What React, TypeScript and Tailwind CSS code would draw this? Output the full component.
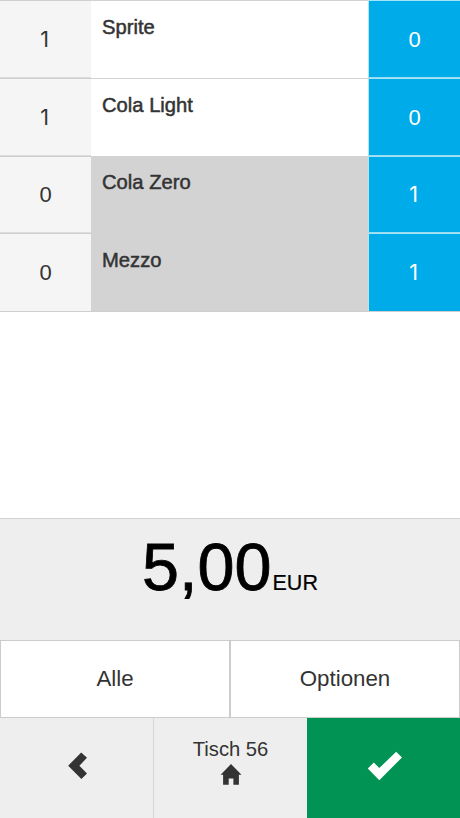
type Item = { name: string; open: number; picked: number; height: string; pad: string };

const items: Item[] = [
  { name: 'Sprite', open: 1, picked: 0, height: 'h-[78px]', pad: 'pt-[14px]' },
  { name: 'Cola Light', open: 1, picked: 0, height: 'h-[78px]', pad: 'pt-[14px]' },
  { name: 'Cola Zero', open: 0, picked: 1, height: 'h-[77px]', pad: 'pt-[13px]' },
  { name: 'Mezzo', open: 0, picked: 1, height: 'h-[78px]', pad: 'pt-[14px]' },
];

// The "1" is set in Inter, whose figure has no foot serif.
function Count({ value }: { value: number }) {
  return (
    <span className={value === 1 ? "mr-[2px] font-['Inter',sans-serif] text-[21.5px] leading-none" : 'text-[22px] leading-none'}>
      {value}
    </span>
  );
}

function Row({ item, first }: { item: Item; first: boolean }) {
  const done = item.open === 0;
  return (
    <div className={`flex ${item.height}`}>
      <div className={`flex w-[91px] items-center justify-center border-t border-[#cfcfcf] bg-[#f5f5f5] ${first ? '' : 'shadow-[0_-1px_0_#dcdcdc]'}`}>
        <Count value={item.open} />
      </div>
      <div className={`w-[277px] border-t border-[#d2d2d2] pl-[11px] text-[20.2px] leading-[24px] [-webkit-text-stroke:0.5px_#333] ${item.pad} ${done ? 'bg-[#d3d3d3]' : 'bg-white'}`}>
        {item.name}
      </div>
      <div className={`flex flex-1 items-center justify-center border-l border-t border-l-[#b5e7f3] border-t-[#a5e4f6] bg-[#00abe9] text-white ${first ? '' : 'shadow-[0_-1px_0_#9bdcf1]'}`}>
        <Count value={item.picked} />
      </div>
    </div>
  );
}

export default function App() {
  return (
    <div className="flex h-[818px] w-[460px] flex-col overflow-hidden bg-white font-['Liberation_Sans',Arial,sans-serif] text-[#333]">
      <div className="h-[312px] border-b border-[#cfcfcf]">
        {items.map((item, i) => (
          <Row key={item.name} item={item} first={i === 0} />
        ))}
      </div>
      <div className="flex-1" />
      <div className="flex h-[122px] items-baseline justify-center border-t border-[#d3d3d3] bg-[#eee] pt-[10px] text-black">
        <span className="text-[66.5px] leading-[76px] [-webkit-text-stroke:0.8px_#000]">5,00</span>
        <span className="ml-px text-[21.5px] [-webkit-text-stroke:0.2px_#000]">EUR</span>
      </div>
      <div className="flex h-[78px] text-[22.3px]">
        <button className="w-[230px] border border-[#ccc] bg-white">Alle</button>
        <button className="w-[230px] border border-[#ccc] bg-white">Optionen</button>
      </div>
      <div className="flex h-[100px] bg-[#eee]">
        <button className="flex w-[154px] items-center justify-center border-r border-[#d6d6d6]">
          <svg className="mt-[-5px] h-[27px] w-[20px]" viewBox="0 0 20 27" fill="#333">
            <path d="M14.2 .5 20 5.8 12.4 13.7 20 21.6 14.4 26.9 1.2 13.7Z" />
          </svg>
        </button>
        <button className="flex w-[153px] flex-col items-center pt-[19px] text-[20.2px] leading-[24px]">
          <span>Tisch 56</span>
          <svg className="mt-[3px] h-[22px] w-[23px]" viewBox="0 0 23 22" fill="#333">
            <path d="M12 0 22.5 10.8H19.9V20.8H14.4V14.4H9.7V20.8H4.1V10.8H1.6Z" />
          </svg>
        </button>
        <button className="flex flex-1 items-center justify-center bg-[#009354]">
          <svg className="mt-[-4px] h-[30px] w-[38px]" viewBox="0 0 38 30" fill="#fff">
            <path d="M31.2 .8 37 6.4 14.3 29.2 2.8 17.6 8.8 11.6 14.3 17Z" />
          </svg>
        </button>
      </div>
    </div>
  );
}
